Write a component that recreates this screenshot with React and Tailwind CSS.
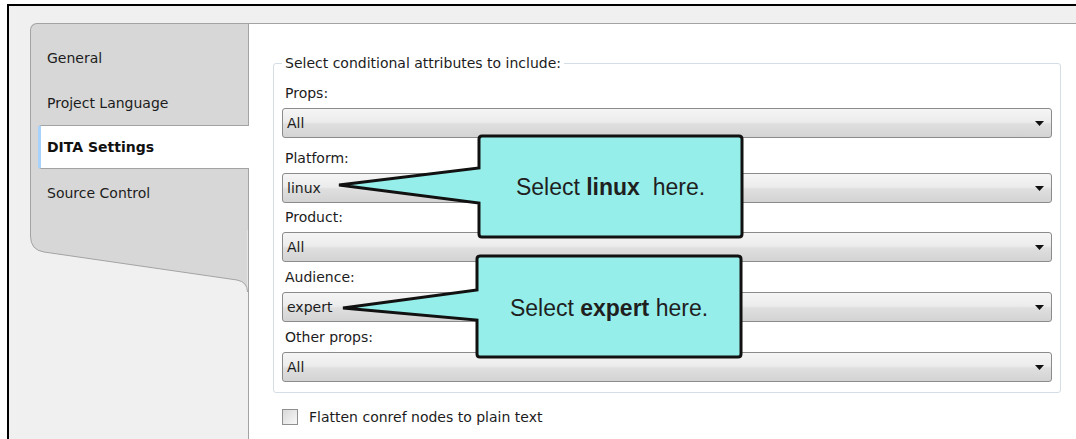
import React from 'react';

const tabs = ['General', 'Project Language', 'DITA Settings', 'Source Control'];

const fields = [
    { label: 'Props:', value: 'All', gap: 'mt-[14px]' },
    { label: 'Platform:', value: 'linux', gap: 'mt-[12px]' },
    { label: 'Product:', value: 'All', gap: 'mt-[6px]' },
    { label: 'Audience:', value: 'expert', gap: 'mt-[7px]' },
    { label: 'Other props:', value: 'All', gap: 'mt-[7px]' },
];

const Dropdown = ({ value }) => (
    <div className="h-[30px] flex items-center justify-between pl-[4px] pr-[7px] rounded-[3px] border border-[#8b8b8b] bg-[linear-gradient(to_bottom,#f5f5f5_0%,#ececec_46%,#dfdfdf_54%,#d3d3d3_100%)]">
        <span>{value}</span>
        <svg width="9" height="5" viewBox="0 0 9 5">
            <path d="M0 0H9L4.5 5Z" fill="#111" />
        </svg>
    </div>
);

const App = () => {
    return (
        <div className="relative w-[1076px] h-[439px] overflow-hidden bg-white pt-[4px] pl-[7px] text-[14px] text-[#1c1c1c] font-['DejaVu_Sans',sans-serif]">
            <div className="h-full flex flex-col border-t-2 border-l-2 border-black bg-[#f0f0f0]">
                <div className="h-[17px] shrink-0" />
                <div className="flex flex-1">
                    {/* tab strip */}
                    <div className="w-[239px] shrink-0 pl-[21px] flex flex-col">
                        <div className="bg-[#d7d7d7] border-t border-l border-[#a3a3a3] rounded-tl-[7px] pt-[12px] pb-[13px]">
                            {tabs.map((tab, i) =>
                                tab === 'DITA Settings' ? (
                                    <div key={tab} className="relative z-10 -mr-px ml-[7px] h-[44px] flex items-center bg-white border-y border-[#a3a3a3] border-l-[3px] border-l-[#a6d2fb] rounded-l-[3px] pl-[6px] font-bold text-[#111]">
                                        {tab}
                                    </div>
                                ) : (
                                    <div key={tab} className={`flex items-center pl-[16px] ${i === 0 ? 'h-[45px]' : i === 3 ? 'h-[48px]' : 'h-[44px]'}`}>
                                        {tab}
                                    </div>
                                )
                            )}
                        </div>
                        <svg width="218" height="62" viewBox="0 0 218 62" className="block">
                            <path d="M0.5 0V6Q0.5 20 14 22L207 50Q217.5 52 217.5 62V0Z" fill="#d7d7d7" />
                            <path d="M0.5 0V6Q0.5 20 14 22L207 50Q217.5 52 217.5 62" fill="none" stroke="#a3a3a3" />
                        </svg>
                    </div>

                    {/* settings panel */}
                    <div className="flex-1 bg-white border-t border-l border-[#a3a3a3] pl-[24px] pr-[15px]">
                        <fieldset className="mt-[31px] border border-[#d5dde6] rounded-[3px] px-[8px] pb-[10px]">
                            <legend className="px-[3px] leading-[16px]">Select conditional attributes to include:</legend>
                            {fields.map((f) => (
                                <div key={f.label}>
                                    <div className={`pl-[3px] leading-[16px] mb-[7px] ${f.gap}`}>{f.label}</div>
                                    <Dropdown value={f.value} />
                                </div>
                            ))}
                        </fieldset>
                        <label className="mt-[16px] ml-[9px] flex items-center gap-[11px] leading-[16px]">
                            <span className="w-[16px] h-[16px] border border-[#8e8f8f] bg-[linear-gradient(135deg,#d9d9d9,#f7f7f7)]" />
                            Flatten conref nodes to plain text
                        </label>
                    </div>
                </div>
            </div>

            {/* callouts */}
            <svg className="absolute left-0 top-0 pointer-events-none" width="1076" height="439">
                <path
                    d="M482 136H739Q742 136 742 139V234Q742 237 739 237H482Q479 237 479 234V203L339 185L479 168V139Q479 136 482 136Z"
                    fill="#96eeea"
                    stroke="#111"
                    strokeWidth="3"
                />
                <path
                    d="M480 256H738Q741 256 741 259V354Q741 357 738 357H480Q477 357 477 354V320L343 308L477 290V259Q477 256 480 256Z"
                    fill="#96eeea"
                    stroke="#111"
                    strokeWidth="3"
                />
            </svg>
            <div className="absolute left-[479px] top-[138px] w-[263px] h-[99px] flex items-center justify-center text-[23px] text-[#1f1f1f] font-['Liberation_Sans',Arial,sans-serif]">
                <span>
                    Select <b>linux</b>&nbsp; here.
                </span>
            </div>
            <div className="absolute left-[477px] top-[259px] w-[264px] h-[98px] flex items-center justify-center text-[23px] text-[#1f1f1f] font-['Liberation_Sans',Arial,sans-serif]">
                <span>
                    Select <b>expert</b> here.
                </span>
            </div>
        </div>
    );
};

export default App;
